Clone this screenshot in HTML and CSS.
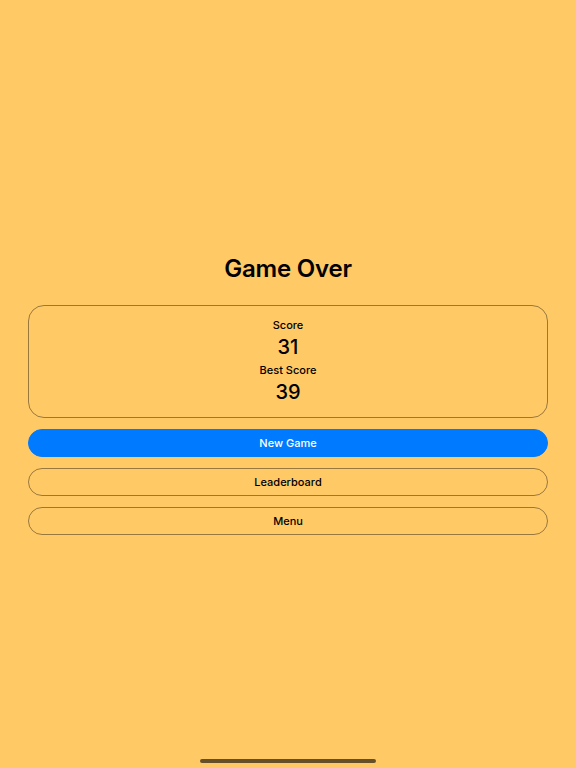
FILE: index.html
```
<!DOCTYPE html>
<html>
<head>
<meta charset="utf-8">
<link rel="stylesheet" href="styles.css">
</head>
<body>
<main class="screen">
  <h1 class="title">Game Over</h1>
  <section class="card">
    <div class="label">Score</div>
    <div class="value">31</div>
    <div class="label label-best">Best Score</div>
    <div class="value">39</div>
  </section>
  <button class="btn btn-primary">New Game</button>
  <button class="btn">Leaderboard</button>
  <button class="btn">Menu</button>
</main>
<div class="home-indicator"></div>
</body>
</html>
```
FILE: styles.css
```
html, body {
  margin: 0;
  padding: 0;
  background: #FFC966;
  height: 100%;
}
body {
  font-family: Inter, "Noto Sans", sans-serif;
  color: #000;
}
.screen {
  display: flex;
  flex-direction: column;
  align-items: stretch;
  padding: 254px 28px 0 28px;
}
.title {
  margin: 0;
  font-size: 24px;
  line-height: 30px;
  font-weight: 600;
  text-align: center;
  letter-spacing: -0.2px;
}
.card {
  margin-top: 21px;
  border: 1px solid rgba(0,0,0,0.4);
  border-radius: 16px;
  padding: 11px 0 13px 0;
  display: flex;
  flex-direction: column;
  align-items: center;
}
.label {
  font-size: 11px;
  line-height: 16px;
  font-weight: 550;
}
.label-best {
  margin-top: 3px;
}
.value {
  margin-top: 2px;
  font-size: 20px;
  line-height: 24px;
  font-weight: 500;
}
.btn {
  font-family: inherit;
  margin: 11px 0 0 0;
  height: 28px;
  border: 1px solid rgba(0,0,0,0.4);
  border-radius: 14px;
  background: transparent;
  color: #000;
  font-size: 11px;
  font-weight: 550;
  padding: 0;
}
.btn-primary {
  background: #007AFF;
  border-color: #007AFF;
  color: #fff;
  font-weight: 450;
}
.home-indicator {
  position: fixed;
  left: 200px;
  bottom: 5px;
  width: 176px;
  height: 4px;
  border-radius: 2px;
  background: rgba(0,0,0,0.6);
}
```
